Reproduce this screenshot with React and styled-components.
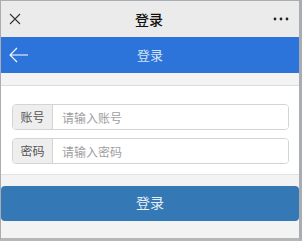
import React from "react";
import styled, { createGlobalStyle } from "styled-components";

const GlobalStyle = createGlobalStyle`
  html, body {
    margin: 0;
    padding: 0;
    background: #fff;
  }
  body {
    font-family: "Noto Sans CJK SC", "Liberation Sans", sans-serif;
  }
`;

function App() {
  return (
    <>
      <GlobalStyle />
      <Frame>
        <TopBar>
          <IconSlot>
            <svg width="12" height="12" viewBox="0 0 12 12">
              <path d="M1 1 L11 11 M11 1 L1 11" stroke="#333" strokeWidth="1.1" />
            </svg>
          </IconSlot>
          <TopTitle>登录</TopTitle>
          <IconSlot $right>
            <svg width="16" height="4" viewBox="0 0 16 4">
              <circle cx="2" cy="2" r="1.4" fill="#222" />
              <circle cx="8" cy="2" r="1.4" fill="#222" />
              <circle cx="14" cy="2" r="1.4" fill="#222" />
            </svg>
          </IconSlot>
        </TopBar>
        <NavBar>
          <BackButton>
            <svg width="20" height="16" viewBox="0 0 20 16">
              <path
                d="M8 1 L1 8 L8 15 M1 8 L19 8"
                stroke="#fff"
                strokeWidth="1.1"
                fill="none"
              />
            </svg>
          </BackButton>
          <NavTitle>登录</NavTitle>
        </NavBar>
        <Gap $h={12} />
        <FormPanel>
          <InputGroup>
            <Addon>账号</Addon>
            <Field placeholder="请输入账号" />
          </InputGroup>
          <InputGroup>
            <Addon>密码</Addon>
            <Field type="password" placeholder="请输入密码" />
          </InputGroup>
        </FormPanel>
        <Gap $h={11} />
        <SubmitButton>登录</SubmitButton>
      </Frame>
    </>
  );
}

const Frame = styled.div`
  width: 302px;
  height: 241px;
  box-sizing: border-box;
  border-top: 1px solid #a9acb0;
  border-left: 1px solid #a9acb0;
  border-right: 3px solid #a9acb0;
  border-bottom: 3px solid #b4b7ba;
  background: #f3f3f3;
  display: flex;
  flex-direction: column;
  overflow: hidden;
`;

const TopBar = styled.div`
  height: 36px;
  flex-shrink: 0;
  background: #ebebeb;
  display: flex;
  align-items: center;
  justify-content: space-between;
  padding: 0 10px 0 8px;
`;

const IconSlot = styled.div`
  width: 30px;
  display: flex;
  justify-content: ${(p) => (p.$right ? "flex-end" : "flex-start")};
  align-items: center;
`;

const TopTitle = styled.div`
  font-size: 14px;
  font-weight: 500;
  color: #111;
  line-height: 1;
`;

const NavBar = styled.div`
  height: 36px;
  flex-shrink: 0;
  background: #2d74da;
  display: flex;
  align-items: center;
`;

const BackButton = styled.div`
  width: 40px;
  padding-left: 8px;
  display: flex;
  align-items: center;
`;

const NavTitle = styled.div`
  flex: 1;
  text-align: center;
  margin-right: 48px;
  padding-bottom: 2px;
  font-size: 13px;
  line-height: 1;
  color: #d5e4f5;
`;

const Gap = styled.div`
  height: ${(p) => p.$h}px;
  flex-shrink: 0;
`;

const FormPanel = styled.div`
  flex-shrink: 0;
  background: #fff;
  border-top: 1px solid #dcdcdc;
  border-bottom: 1px solid #e2e2e2;
  padding: 18px 10px 10px 11px;
  display: flex;
  flex-direction: column;
  gap: 8px;
`;

const InputGroup = styled.div`
  display: flex;
  height: 26px;
  box-sizing: border-box;
  border: 1px solid #d4d4d4;
  border-radius: 4px;
  overflow: hidden;
`;

const Addon = styled.div`
  width: 40px;
  background: #eeeeee;
  border-right: 1px solid #d4d4d4;
  display: flex;
  align-items: center;
  justify-content: center;
  padding-bottom: 1px;
  box-sizing: border-box;
  font-size: 12px;
  line-height: 1;
  color: #555;
`;

const Field = styled.input`
  flex: 1;
  border: none;
  outline: none;
  padding: 0 9px;
  font-size: 12px;
  font-family: inherit;
  background: #fff;
  &::placeholder {
    color: #a0a0a0;
  }
`;

const SubmitButton = styled.button`
  flex-shrink: 0;
  height: 35px;
  border: none;
  border-radius: 4px;
  background: #3479b6;
  color: #e8eef5;
  font-size: 14px;
  line-height: 1;
  font-family: inherit;
  width: 100%;
  padding: 0 0 3px;
  display: flex;
  align-items: center;
  justify-content: center;
`;

export default App;
